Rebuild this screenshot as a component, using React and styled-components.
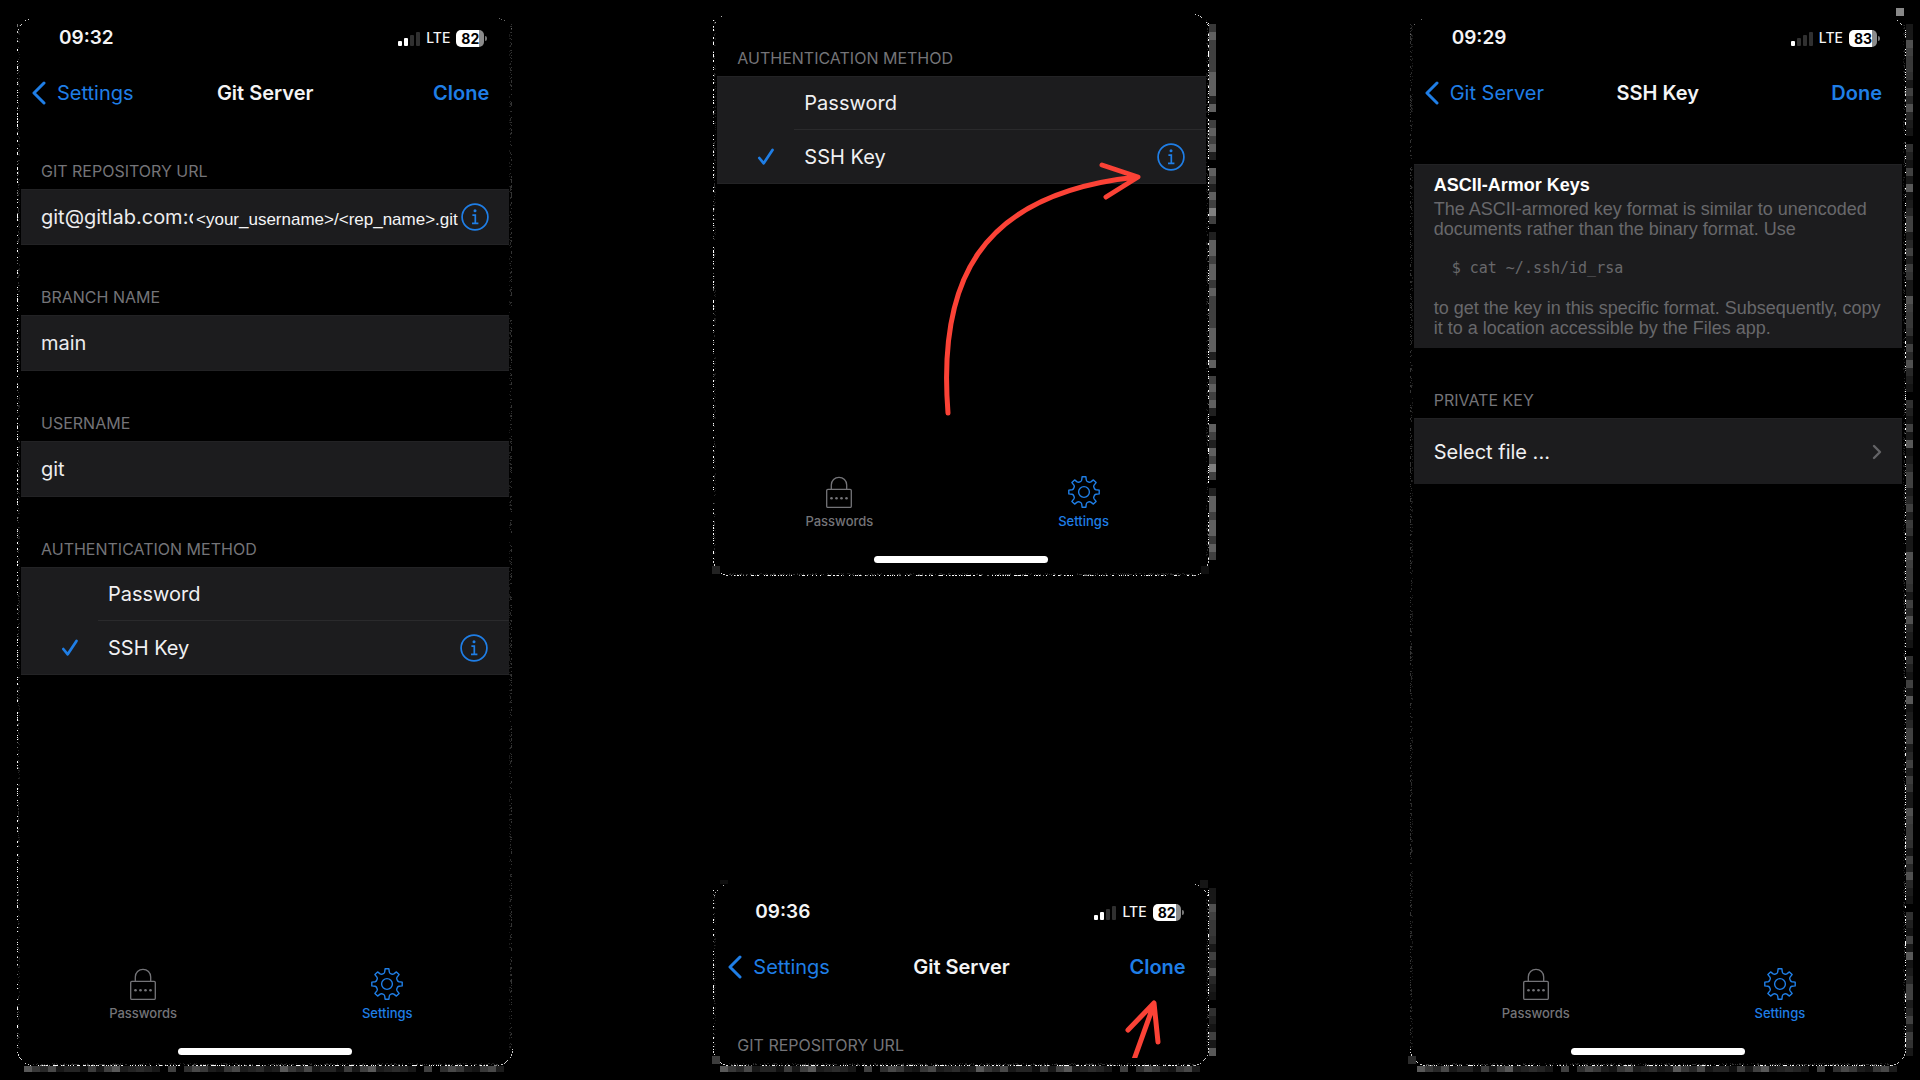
import React, { useMemo, useState } from "react";
import styled, { createGlobalStyle } from "styled-components";

const BLUE = "#1f7ee6";
const GREY = "#747478";
const RED = "#fb4236";

const GlobalStyle = createGlobalStyle`
  * { box-sizing: border-box; }
  body { margin: 0; background: #000; }
`;

const Page = styled.main`
  display: grid;
  grid-template-columns: repeat(3, minmax(0, 1fr));
  column-gap: 208px;
  min-height: 100vh;
  padding: 16px 18px 14px 21px;
  background: #000;
  color: #f4f4f5;
  font-family: Inter, "Liberation Sans", sans-serif;
`;

const Column = styled.div`
  display: flex;
  flex-direction: column;
  justify-content: space-between;
`;

const Screen = styled.section`
  position: relative;
  display: flex;
  flex-direction: column;
  min-height: ${(p) => p.$minHeight || "0"};
  padding-top: ${(p) => p.$padTop || "0"};
`;

const Overlay = styled.svg`
  position: absolute;
  top: 0;
  left: 0;
  overflow: ${(p) => (p.$clip ? "hidden" : "visible")};
  pointer-events: none;
`;

const StatusRow = styled.div`
  display: flex;
  align-items: center;
  justify-content: space-between;
  height: 43px;
  padding: 1px 22px 0 38px;
`;

const Clock = styled.time`
  font-size: 19px;
  font-weight: 600;
  line-height: 24px;
`;

const StatusIcons = styled.div`
  display: flex;
  align-items: center;
  gap: 6px;
`;

const Carrier = styled.span`
  font-size: 14px;
  font-weight: 500;
  line-height: 18px;
`;

const Battery = styled.span`
  position: relative;
  width: 28px;
  height: 17px;
  margin-right: 3px;
  border-radius: 5px;
  background: linear-gradient(to right, #fff 83%, #8b8b8b 83%);
  color: #000;
  font-size: 14px;
  font-weight: 700;
  line-height: 17px;
  text-align: center;

  &::after {
    content: "";
    position: absolute;
    top: 6px;
    right: -3px;
    width: 2px;
    height: 5px;
    border-radius: 0 2px 2px 0;
    background: #777;
  }
`;

const NavRow = styled.header`
  display: grid;
  grid-template-columns: 1fr auto 1fr;
  align-items: center;
  height: 60px;
  padding: 7px 20px 0;
  font-size: 20px;
  line-height: 26px;
`;

const BackLink = styled.a`
  display: flex;
  align-items: center;
  gap: 11px;
  margin-left: -9px;
  color: ${BLUE};
  text-decoration: none;
`;

const Title = styled.h1`
  margin: 0;
  font-size: 20px;
  font-weight: 600;
  line-height: 26px;
`;

const NavButton = styled.button`
  justify-self: end;
  padding: 0;
  border: 0;
  background: none;
  color: ${BLUE};
  font: inherit;
  font-weight: 600;
`;

const SectionLabel = styled.label`
  display: block;
  padding: ${(p) => (p.$compact ? "32px" : "42px")} 20px 8px;
  color: ${GREY};
  font-size: 16px;
  line-height: 20px;
  text-transform: uppercase;
`;

const Field = styled.div`
  display: flex;
  align-items: center;
  height: 56px;
  padding: 0 20px;
  background: #1c1c1e;
  border-top: 1px solid #222224;
  border-bottom: 1px solid #222224;
`;

const TextInput = styled.input`
  width: ${(p) => p.$width || "100%"};
  padding: 0;
  border: 0;
  outline: 0;
  background: none;
  color: #ececee;
  font-family: inherit;
  font-size: 20px;
  line-height: 26px;
`;

const UrlHint = styled.span`
  flex: 1;
  padding: 5px 0 0 3px;
  font-family: "Liberation Sans", Arial, sans-serif;
  font-size: 17px;
  line-height: 20px;
  white-space: nowrap;
`;

const InfoButton = styled.button`
  display: flex;
  padding: 0;
  border: 0;
  background: none;
  color: ${BLUE};
`;

const Methods = styled.div`
  background: #1c1c1e;
  border-top: 1px solid #232325;
  border-bottom: 1px solid #232325;
`;

const MethodRow = styled.div`
  display: grid;
  grid-template-columns: 77px 1fr;
  height: 53px;
`;

const CheckCell = styled.span`
  display: flex;
  align-items: center;
  padding-left: 40px;
  color: ${BLUE};
`;

const MethodBody = styled.div`
  display: flex;
  align-items: center;
  justify-content: space-between;
  padding: 0 21px 0 10px;
  border-bottom: ${(p) => (p.$line ? "1px solid #2a2a2c" : "0")};
`;

const MethodLabel = styled.label`
  color: #f0f0f2;
  font-size: 20px;
  line-height: 26px;
`;

const HiddenRadio = styled.input`
  position: absolute;
  opacity: 0;
  margin: 0;
`;

const Note = styled.article`
  margin-top: 45px;
  height: 184px;
  padding: 10px 18px 0 20px;
  background: #1c1c1e;
  border-top: 1px solid #222224;
  color: #68686b;
  font-family: "Liberation Sans", Arial, sans-serif;
  font-size: 18px;
  line-height: 20px;
`;

const NoteTitle = styled.h2`
  margin: 0 0 4px;
  color: #fff;
  font-size: 18px;
  line-height: 20px;
`;

const NoteText = styled.p`
  margin: 0;
`;

const Command = styled.pre`
  margin: 19px 0 20px 18px;
  font-family: "DejaVu Sans Mono", monospace;
  font-size: 15px;
  line-height: 20px;
`;

const FileButton = styled.button`
  display: flex;
  align-items: center;
  justify-content: space-between;
  width: 100%;
  height: 66px;
  padding: 0 20px;
  border: 0;
  border-top: 1px solid #222224;
  background: #1c1c1e;
  color: #f0f0f2;
  font-family: inherit;
  font-size: 20px;
  line-height: 26px;
  text-align: left;
`;

const TabArea = styled.footer`
  margin-top: auto;
  padding-bottom: 11px;
`;

const Tabs = styled.nav`
  display: grid;
  grid-template-columns: 1fr 1fr;
  margin-bottom: 27px;
`;

const Tab = styled.button`
  display: flex;
  flex-direction: column;
  align-items: center;
  gap: 5px;
  padding: 0;
  border: 0;
  background: none;
  color: ${(p) => (p.$active ? BLUE : GREY)};
  font-family: inherit;
  font-size: 13px;
  font-weight: 500;
  line-height: 16px;
`;

const HomeBar = styled.div`
  width: 174px;
  height: 7px;
  margin: 0 auto;
  border-radius: 4px;
  background: #fff;
`;

function Signal({ level }) {
  return (
    <svg width="22" height="15" viewBox="0 0 22 15" aria-hidden="true">
      {[5, 8, 11, 14].map((h, i) => (
        <rect key={h} x={i * 6} y={15 - h} width="4" height={h} rx="1" fill={i < level ? "#fff" : "#303030"} />
      ))}
    </svg>
  );
}

function StatusBar({ time, level, charge }) {
  return (
    <StatusRow>
      <Clock>{time}</Clock>
      <StatusIcons>
        <Signal level={level} />
        <Carrier>LTE</Carrier>
        <Battery>{charge}</Battery>
      </StatusIcons>
    </StatusRow>
  );
}

function NavBar({ back, title, action }) {
  return (
    <NavRow>
      <BackLink href="#back">
        <svg width="14" height="24" viewBox="0 0 14 24" fill="none" stroke="currentColor" strokeWidth="3" strokeLinecap="round" strokeLinejoin="round" aria-hidden="true">
          <path d="M12 2 2 12l10 10" />
        </svg>
        {back}
      </BackLink>
      <Title>{title}</Title>
      <NavButton type="button">{action}</NavButton>
    </NavRow>
  );
}

function InfoIcon() {
  return (
    <svg width="28" height="28" viewBox="0 0 28 28" fill="none" stroke="currentColor" aria-hidden="true">
      <circle cx="14" cy="14" r="12.9" strokeWidth="1.7" />
      <path d="M11.4 12.1h2.9v8M11 20.3h6.4" strokeWidth="1.7" />
      <circle cx="14" cy="7.8" r="1.5" fill="currentColor" stroke="none" />
    </svg>
  );
}

function CheckIcon() {
  return (
    <svg width="18" height="18" viewBox="0 0 18 18" fill="none" stroke="currentColor" strokeWidth="2.7" strokeLinecap="round" strokeLinejoin="round" aria-hidden="true">
      <path d="M2.3 10l4.4 5.3L15.5 2" />
    </svg>
  );
}

function LockIcon() {
  return (
    <svg width="32" height="32" viewBox="0 0 32 32" fill="none" stroke="currentColor" strokeWidth="1.3" aria-hidden="true">
      <rect x="3.7" y="13.4" width="24.6" height="18" rx="1.2" />
      <path d="M8.3 13.4V9a7.7 7.7 0 0 1 15.4 0v4.4" />
      {[8.5, 13.5, 18.5, 23.5].map((x) => (
        <circle key={x} cx={x} cy="22.3" r="1.3" fill="currentColor" stroke="none" />
      ))}
    </svg>
  );
}

function gearPath() {
  const at = (angle, radial, side) => {
    const c = Math.cos(angle);
    const s = Math.sin(angle);
    return `${(16 + radial * c - side * s).toFixed(2)} ${(16 + radial * s + side * c).toFixed(2)}`;
  };
  let d = "";
  for (let i = 0; i < 8; i += 1) {
    const a = (i * Math.PI) / 4;
    d += `${i ? "L" : "M"}${at(a, 10.6, -3.1)}Q${at(a, 11.4, -2.4)} ${at(a, 12, -2.3)}`;
    d += `L${at(a, 15.2, -1.9)}L${at(a, 15.2, 1.9)}L${at(a, 12, 2.3)}Q${at(a, 11.4, 2.4)} ${at(a, 10.6, 3.1)}`;
  }
  return `${d}Z`;
}

function GearIcon() {
  return (
    <svg width="32" height="32" viewBox="0 0 32 32" fill="none" stroke="currentColor" strokeWidth="1.4" strokeLinejoin="round" aria-hidden="true">
      <path d={gearPath()} />
      <circle cx="16" cy="16" r="5.4" />
    </svg>
  );
}

function TabBar() {
  return (
    <TabArea>
      <Tabs>
        <Tab type="button"><LockIcon />Passwords</Tab>
        <Tab type="button" $active><GearIcon />Settings</Tab>
      </Tabs>
      <HomeBar />
    </TabArea>
  );
}

function AuthMethod({ name, compact }) {
  const [method, setMethod] = useState("SSH Key");
  return (
    <>
      <SectionLabel as="div" $compact={compact}>Authentication method</SectionLabel>
      <Methods role="radiogroup" aria-label="Authentication method">
        {["Password", "SSH Key"].map((m, i) => (
          <MethodRow key={m}>
            <CheckCell>
              <HiddenRadio type="radio" id={`${name}-${i}`} name={name} checked={m === method} onChange={() => setMethod(m)} />
              {m === method && <CheckIcon />}
            </CheckCell>
            <MethodBody $line={i === 0}>
              <MethodLabel htmlFor={`${name}-${i}`}>{m}</MethodLabel>
              {i === 1 && <InfoButton type="button" aria-label="SSH key details"><InfoIcon /></InfoButton>}
            </MethodBody>
          </MethodRow>
        ))}
      </Methods>
    </>
  );
}

function random(seed) {
  let s = seed;
  return () => {
    s = (s * 1664525 + 1013904223) % 4294967296;
    return s / 4294967296;
  };
}

const BOTTOM_CELLS = [88, 56, 40, 72, 24, 36, 36, 16, 60, 24, 64, 88, 28, 36, 44, 36, 24, 0, 64, 0, 48, 72, 56, 28, 20, 56, 72, 28, 36, 44, 24, 30];
const BRIGHT_CELLS = [56, 96, 64, 64, 64, 64, 96, 96, 96, 32, 96, 0, 64, 96, 64, 96, 32, 0, 96, 64, 32, 96, 64, 128, 64, 0, 32, 96, 96, 64, 96, 96];
const DIM_CELLS = [24, 24, 80, 64, 56, 56, 48, 24, 64, 40, 80, 40, 28, 20, 0, 48, 32, 20, 64, 24, 88, 20, 28, 40, 64, 64, 28, 40, 64, 30, 60, 50];

/* Torn, pixelated border that runs round each cut-out screen. */
function RaggedEdge({ height, seed, left, right, top = 8, bottomCells, sideCells, sideFrom = 8, sideTo = 0, corners = [] }) {
  const marks = useMemo(() => {
    const next = random(seed);
    const out = [];
    const dot = (x, y, v) => out.push([x, y, 1, 1, v]);
    const side = (x, inner, strength) => {
      for (let y = top; y < height - 16; y += 1) {
        if (next() < 0.32) dot(x, y, strength > 0.6 && next() < 0.75 ? 255 : Math.round(90 * strength + 25));
        if (next() < 0.26) dot(x + inner, y, 42);
        if (next() < 0.2) dot(x + inner * 2, y, 26);
      }
    };
    side(-4, 1, left);
    side(right > 0.6 ? 491 : 490, -1, right);
    for (let x = 12; x < 477; x += 1) {
      if (next() < 0.45) dot(x, height - 1, next() < 0.72 ? 255 : 130);
      if (next() < 0.36) dot(x, height - 2, 50);
      if (next() < 0.18) dot(x, height - 3, 30);
    }
    for (let i = 0; i < 16; i += 1) {
      const a = (i / 16) * (Math.PI / 2);
      const dx = Math.round(16 * (1 - Math.cos(a)));
      const dy = Math.round(16 * Math.sin(a));
      if (next() < 0.8) dot(-4 + dx, height - 17 + dy, 220);
      if (next() < 0.8) dot(491 - dx, height - 17 + dy, 200);
      if (next() < 0.35) dot(-4 + dx, top + 10 - dy, 60 + 150 * left);
      if (next() < 0.35) dot(491 - dx, top + 10 - dy, 60 + 150 * right);
    }
    if (bottomCells) {
      for (let i = 0; i < 60; i += 1) out.push([3 + i * 8, height, 8, 6, bottomCells[i % 32]]);
    }
    if (sideCells) {
      for (let y = sideFrom, i = 0; y < sideTo; y += 8, i += 1) out.push([492, y, 7, 8, sideCells[i % 32]]);
    }
    return out.concat(corners);
  }, [height, seed, left, right, top, bottomCells, sideCells, sideFrom, sideTo, corners]);
  return (
    <Overlay width="488" height={height} shapeRendering="crispEdges" aria-hidden="true">
      {marks.map(([x, y, w, h, v], i) => (
        <rect key={i} x={x} y={y} width={w} height={h} fill={`rgb(${v},${v},${v})`} />
      ))}
    </Overlay>
  );
}

const NO_CORNERS = [];
const CUT_CORNERS = [[-5, 550, 8, 8, 34], [484, 550, 8, 8, 16]];
const CLONE_CORNERS = [[3, -2, 8, 4, 14], [483, -2, 8, 8, 22], [-5, 174, 8, 8, 60]];
const KEY_CORNERS = [[482, -8, 8, 8, 136], [-6, 1040, 8, 8, 44]];

function ServerScreen() {
  return (
    <Screen>
      <StatusBar time="09:32" level={2} charge={82} />
      <NavBar back="Settings" title="Git Server" action="Clone" />
      <SectionLabel htmlFor="repo">Git repository URL</SectionLabel>
      <Field>
        <TextInput id="repo" $width="152px" defaultValue="git@gitlab.com:c" />
        <UrlHint>{"<your_username>/<rep_name>.git"}</UrlHint>
        <InfoButton type="button" aria-label="Repository URL details"><InfoIcon /></InfoButton>
      </Field>
      <SectionLabel htmlFor="branch">Branch name</SectionLabel>
      <Field><TextInput id="branch" defaultValue="main" /></Field>
      <SectionLabel htmlFor="user">Username</SectionLabel>
      <Field><TextInput id="user" defaultValue="git" /></Field>
      <AuthMethod name="server-auth" />
      <TabBar />
      <RaggedEdge height={1050} seed={7} left={1} right={0.3} bottomCells={BOTTOM_CELLS} corners={NO_CORNERS} />
    </Screen>
  );
}

function AuthScreen() {
  return (
    <Screen $minHeight="558px">
      <AuthMethod name="cropped-auth" compact />
      <TabBar />
      <RaggedEdge height={560} top={4} seed={21} left={0.8} right={1} sideCells={BRIGHT_CELLS} sideFrom={8} sideTo={544} corners={CUT_CORNERS} />
      <Overlay width="488" height="558" fill="none" stroke={RED} strokeWidth="5" strokeLinecap="round" strokeLinejoin="round" aria-hidden="true">
        <path d="M231 397C221 270 258 178 420 161M385 149l36 12-32 20" />
      </Overlay>
    </Screen>
  );
}

function CloneScreen() {
  return (
    <Screen $minHeight="184px" $padTop="8px">
      <StatusBar time="09:36" level={2} charge={82} />
      <NavBar back="Settings" title="Git Server" action="Clone" />
      <SectionLabel as="div">Git repository URL</SectionLabel>
      <RaggedEdge height={184} seed={35} left={0.8} right={0.9} bottomCells={BOTTOM_CELLS} sideCells={DIM_CELLS} sideFrom={6} sideTo={172} corners={CLONE_CORNERS} />
      <Overlay $clip width="488" height="176" fill="none" stroke={RED} strokeWidth="5" strokeLinecap="round" strokeLinejoin="round" aria-hidden="true">
        <path d="M414 186l23-64M411 148l26-27 4 39" />
      </Overlay>
    </Screen>
  );
}

function KeyScreen() {
  return (
    <Screen>
      <StatusBar time="09:29" level={1} charge={83} />
      <NavBar back="Git Server" title="SSH Key" action="Done" />
      <Note>
        <NoteTitle>ASCII-Armor Keys</NoteTitle>
        <NoteText>The ASCII-armored key format is similar to unencoded documents rather than the binary format. Use</NoteText>
        <Command>$ cat ~/.ssh/id_rsa</Command>
        <NoteText>to get the key in this specific format. Subsequently, copy it to a location accessible by the Files app.</NoteText>
      </Note>
      <SectionLabel htmlFor="key-file">Private key</SectionLabel>
      <FileButton id="key-file" type="button">
        Select file ...
        <svg width="10" height="16" viewBox="0 0 10 16" fill="none" stroke="#636366" strokeWidth="2.4" strokeLinecap="round" strokeLinejoin="round" aria-hidden="true">
          <path d="M2 2l6 6-6 6" />
        </svg>
      </FileButton>
      <TabBar />
      <RaggedEdge height={1050} seed={58} left={0.3} right={1} bottomCells={BOTTOM_CELLS} sideCells={DIM_CELLS} sideFrom={8} sideTo={1040} corners={KEY_CORNERS} />
    </Screen>
  );
}

export default function App() {
  return (
    <>
      <GlobalStyle />
      <Page>
        <ServerScreen />
        <Column>
          <AuthScreen />
          <CloneScreen />
        </Column>
        <KeyScreen />
      </Page>
    </>
  );
}
